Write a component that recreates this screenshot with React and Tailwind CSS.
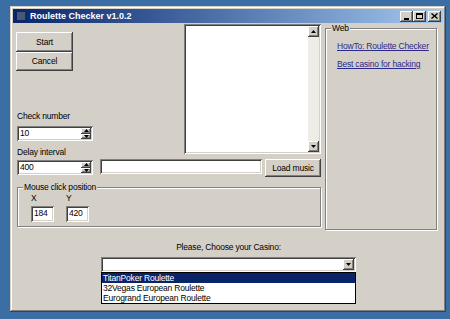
import React from 'react'

const raised =
  'bg-[#d4d0c8] shadow-[inset_-1px_-1px_#404040,inset_1px_1px_#ffffff,inset_-2px_-2px_#808080,inset_2px_2px_#d4d0c8]'
const sunken =
  'bg-white shadow-[inset_1px_1px_#808080,inset_-1px_-1px_#ffffff,inset_2px_2px_#404040,inset_-2px_-2px_#d4d0c8]'
const txt = 'text-[8.5px] tracking-[-0.2px] whitespace-nowrap'

function Arrow({ up }) {
  return (
    <svg width="5" height="3" viewBox="0 0 5 3">
      <path d={up ? 'M2.5 0 L5 3 L0 3 Z' : 'M0 0 L5 0 L2.5 3 Z'} fill="#000" />
    </svg>
  )
}

function SpinEdit({ value }) {
  return (
    <div className={`${sunken} flex h-[15px] w-[76px] items-stretch p-[2px]`}>
      <div className={`${txt} flex-1 pl-[1px] leading-[11px]`}>{value}</div>
      <div className="flex w-[10px] flex-col">
        <div className={`${raised} flex flex-1 items-center justify-center`}>
          <Arrow up />
        </div>
        <div className={`${raised} flex flex-1 items-center justify-center`}>
          <Arrow />
        </div>
      </div>
    </div>
  )
}

function Group({ label, className, children }) {
  return (
    <div className={`relative border border-[#808080] shadow-[inset_1px_1px_#ffffff,1px_1px_#ffffff] ${className}`}>
      <span className={`${txt} absolute left-[5px] top-[-6px] bg-[#d4d0c8] px-[1px] leading-[11px]`}>{label}</span>
      {children}
    </div>
  )
}

export default function App() {
  return (
    <div
      className="h-[319px] w-[450px] overflow-hidden bg-[#3a6ea5] pl-[10px] pt-[6px] text-black"
      style={{ fontFamily: '"Liberation Sans", Arial, sans-serif' }}
    >
      <div className="flex h-[306px] w-[436px] flex-col bg-[#d4d0c8] p-[3px] shadow-[inset_-1px_-1px_#404040,inset_1px_1px_#d4d0c8,inset_-2px_-2px_#808080,inset_2px_2px_#ffffff]">
        {/* title bar */}
        <div className="flex h-[14px] items-center bg-gradient-to-r from-[#0a246a] to-[#a6caf0] pl-[4px] pr-[2px]">
          <div className="mr-[5px] h-[8px] w-[8px] bg-[#4a5878]" />
          <span className="text-[9px] font-bold leading-[12px] text-white">Roulette Checker v1.0.2</span>
          <div className="ml-auto flex items-center">
            <div className={`${raised} flex h-[11px] w-[13px] items-end justify-center pb-[2px]`}>
              <div className="h-[2px] w-[5px] bg-black" />
            </div>
            <div className={`${raised} flex h-[11px] w-[13px] items-center justify-center`}>
              <div className="h-[6px] w-[7px] border border-t-2 border-black" />
            </div>
            <div className={`${raised} ml-[2px] flex h-[11px] w-[13px] items-center justify-center`}>
              <svg width="7" height="6" viewBox="0 0 7 6">
                <path d="M0.5 0.5 L6.5 5.5 M6.5 0.5 L0.5 5.5" stroke="#000" strokeWidth="1.4" />
              </svg>
            </div>
          </div>
        </div>

        {/* client */}
        <div className="flex flex-1 flex-col pl-[3px]">
          <div className="flex gap-[4px]">
            {/* left area */}
            <div className="flex w-[305px] flex-col pt-[1px]">
              <div className="flex h-[134px]">
                <div className="flex w-[168px] flex-col pt-[8px]">
                  <div className="flex w-[57px] flex-col">
                    <div className={`${raised} ${txt} flex h-[20px] items-center justify-center`}>Start</div>
                    <div className={`${raised} ${txt} flex h-[19px] items-center justify-center`}>Cancel</div>
                  </div>
                  <div className={`${txt} mt-[40px] pl-[1px] leading-[11px]`}>Check number</div>
                  <div className="mt-[4px] pl-[1px]">
                    <SpinEdit value="10" />
                  </div>
                  <div className={`${txt} mt-[6px] pl-[1px] leading-[11px]`}>Delay interval</div>
                </div>
                {/* memo */}
                <div className={`${sunken} flex h-[130px] w-[137px] justify-end p-[2px]`}>
                  <div className="flex w-[11px] flex-col bg-[#eeece6]">
                    <div className={`${raised} flex h-[11px] items-center justify-center`}>
                      <Arrow up />
                    </div>
                    <div className="flex-1" />
                    <div className={`${raised} flex h-[11px] items-center justify-center`}>
                      <Arrow />
                    </div>
                  </div>
                </div>
              </div>
              <div className="mt-[1px] flex items-start pl-[1px]">
                <div className="mt-[1px]">
                  <SpinEdit value="400" />
                </div>
                <div className={`${sunken} ml-[7px] h-[15px] w-[162px]`} />
                <div className={`${raised} ${txt} ml-[3px] flex h-[18px] w-[56px] items-center justify-center`}>
                  Load music
                </div>
              </div>
              <Group label="Mouse click position" className="ml-[1px] mt-[10px] h-[40px] w-[304px]">
                <div className="flex gap-[12px] pl-[13px] pt-[5px]">
                  <div className="flex flex-col">
                    <span className={`${txt} leading-[10px]`}>X</span>
                    <div className={`${sunken} ${txt} mt-[3px] h-[16px] w-[23px] pl-[3px] pt-[2px] leading-[11px]`}>184</div>
                  </div>
                  <div className="flex flex-col">
                    <span className={`${txt} leading-[10px]`}>Y</span>
                    <div className={`${sunken} ${txt} mt-[3px] h-[16px] w-[23px] pl-[3px] pt-[2px] leading-[11px]`}>420</div>
                  </div>
                </div>
              </Group>
            </div>

            {/* web group */}
            <Group label="Web" className="mt-[5px] h-[202px] w-[112px]">
              <div className={`${txt} flex flex-col gap-[7px] pl-[11px] pt-[12px] leading-[11px] text-[#2a2a8c] underline`}>
                <span>HowTo: Roulette Checker</span>
                <span>Best casino for hacking</span>
              </div>
            </Group>
          </div>

          {/* casino chooser */}
          <div className="mt-[12px] flex flex-col items-start pl-[85px]">
            <div className={`${txt} w-[255px] text-center leading-[11px]`}>Please, Choose your Casino:</div>
            <div className={`${sunken} mt-[4px] flex h-[15px] w-[255px] justify-end p-[2px]`}>
              <div className={`${raised} flex w-[11px] items-center justify-center`}>
                <Arrow />
              </div>
            </div>
            <div className={`${txt} w-[255px] border border-black bg-white leading-[10px]`}>
              <div className="bg-[#0a246a] pl-[1px] text-white">TitanPoker Roulette</div>
              <div className="pl-[1px]">32Vegas European Roulette</div>
              <div className="pl-[1px]">Eurogrand European Roulette</div>
            </div>
          </div>
        </div>
      </div>
    </div>
  )
}
